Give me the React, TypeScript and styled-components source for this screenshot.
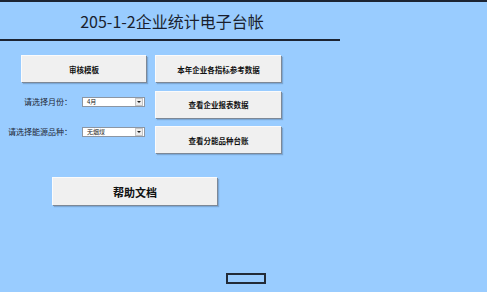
import React from "react";
import styled, {createGlobalStyle} from "styled-components";

const GlobalStyle = createGlobalStyle`
  html, body {
    margin: 0;
    padding: 0;
    background: #99ccff;
  }
  body {
    font-family: "Noto Sans CJK SC", "Noto Sans", sans-serif;
  }
`

const Page = styled.div`
  width: 487px;
  height: 292px;
  box-sizing: border-box;
  border-top: 2px solid #1c2433;
  background: #99ccff;
  overflow: hidden;
`

const Header = styled.div`
  width: 340px;
  height: 39px;
  border-bottom: 2px solid #1c2433;
  display: flex;
  align-items: center;
  justify-content: center;
  padding-left: 4px;
  box-sizing: border-box;
`

const Title = styled.h1`
  margin: 0;
  font-size: 16px;
  font-weight: 400;
  color: #1a1f2e;
  line-height: 1;
`

const Board = styled.div`
  display: grid;
  grid-template-columns: 138px 126px;
  grid-auto-rows: 27px;
  column-gap: 9px;
  row-gap: 8.5px;
  margin-top: 14px;
  padding-left: 8px;
  justify-items: end;
`

const Button = styled.div<{ $width?: number; $size?: number }>`
  width: ${({$width}) => ($width ? `${$width}px` : '100%')};
  height: 100%;
  box-sizing: border-box;
  background: #f0f0f0;
  border-top: 1px solid #fbfbfb;
  border-left: 1px solid #fbfbfb;
  box-shadow: 1px 1px 0 #7d8896, 2px 2px 1px rgba(40, 60, 90, 0.25);
  display: flex;
  align-items: center;
  justify-content: center;
  font-size: ${({$size}) => $size ?? 7.5}px;
  font-weight: 700;
  color: #111;
  cursor: pointer;
  white-space: nowrap;
`

const Field = styled.div<{ $top: number }>`
  width: 100%;
  display: flex;
  align-items: flex-start;
  justify-content: flex-end;
  gap: 10px;
  padding-top: ${({$top}) => $top}px;
`

const Label = styled.span`
  font-size: 8px;
  line-height: 10px;
  color: #1d2736;
  white-space: nowrap;
`

const SelectBox = styled.div`
  width: 63px;
  height: 10px;
  box-sizing: border-box;
  background: #ffffff;
  border: 1px solid #8c96a3;
  display: flex;
  align-items: center;
  margin-right: 1px;
`

const SelectValue = styled.span`
  flex: 1;
  font-size: 6px;
  line-height: 8px;
  color: #222;
  padding-left: 4px;
`

const Arrow = styled.span`
  width: 6px;
  height: 6px;
  margin-right: 1px;
  background: #ececec;
  border: 1px solid #c4c4c4;
  display: flex;
  align-items: center;
  justify-content: center;
  &::after {
    content: "";
    border-left: 2px solid transparent;
    border-right: 2px solid transparent;
    border-top: 2px solid #222;
  }
`

const HelpRow = styled.div`
  display: flex;
  margin-top: 24px;
  padding-left: 52px;
  height: 28px;
`

const CellMarker = styled.div`
  margin: 68px 0 0 226px;
  width: 40px;
  height: 11px;
  box-sizing: border-box;
  border: 2px solid #222b38;
`

function Dropdown({value}: { value: string }) {
    return (
        <SelectBox>
            <SelectValue>{value}</SelectValue>
            <Arrow/>
        </SelectBox>
    )
}

export default function App() {
    return (
        <Page>
            <GlobalStyle/>
            <Header>
                <Title>205-1-2企业统计电子台帐</Title>
            </Header>
            <Board>
                <Button $width={125}>审核模板</Button>
                <Button>本年企业各指标参考数据</Button>
                <Field $top={6}>
                    <Label>请选择月份：</Label>
                    <Dropdown value="4月"/>
                </Field>
                <Button>查看企业报表数据</Button>
                <Field $top={1}>
                    <Label>请选择能源品种：</Label>
                    <Dropdown value="无烟煤"/>
                </Field>
                <Button>查看分能品种台账</Button>
            </Board>
            <HelpRow>
                <Button $width={165} $size={11}>帮助文档</Button>
            </HelpRow>
            <CellMarker/>
        </Page>
    )
}
